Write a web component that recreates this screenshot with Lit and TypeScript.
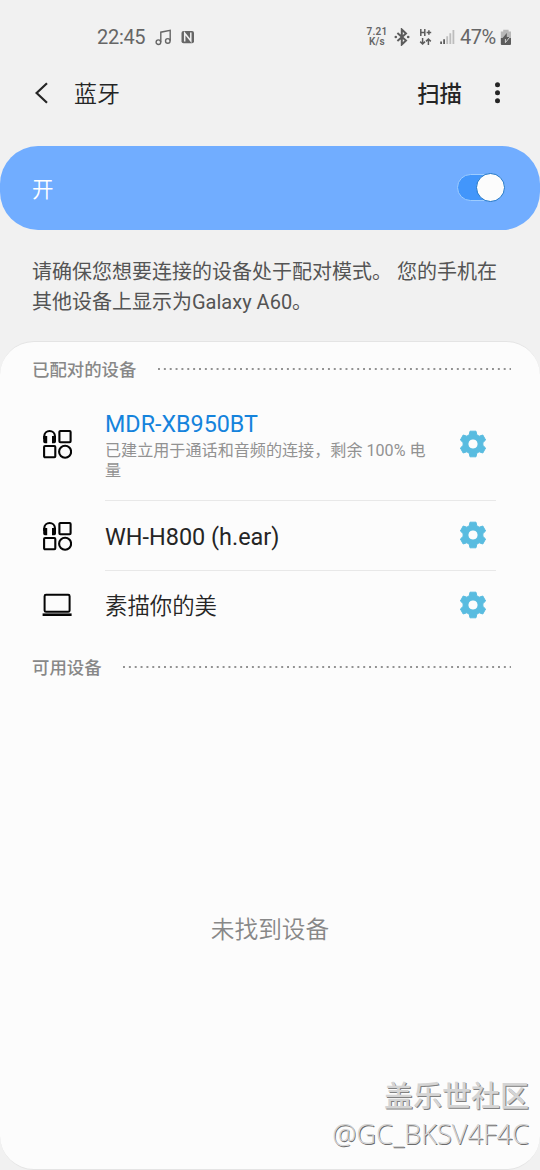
import { LitElement, html, css, svg, nothing } from 'lit';
import { customElement, property } from 'lit/decorators.js';

type DeviceKind = 'audio' | 'laptop';

interface Device {
    name: string;
    kind: DeviceKind;
    status?: string;
}

const PAIRED: Device[] = [
    { name: 'MDR-XB950BT', kind: 'audio', status: '已建立用于通话和音频的连接，剩余 100% 电量' },
    { name: 'WH-H800 (h.ear)', kind: 'audio' },
    { name: '素描你的美', kind: 'laptop' },
];

const audioIcon = svg`
    <g fill="none" stroke="#050505" stroke-width="2.1">
        <path d="M2.3 10V7A5.3 5 0 0 1 12.9 7V10" />
        <rect x="17.4" y="2" width="11.2" height="11.2" rx="1" />
        <rect x="2.1" y="17" width="11.2" height="11.2" rx="1" />
        <circle cx="23.1" cy="22.7" r="6" />
    </g>
    <path fill="#050505" d="M1.2 7H5.2V14.2H2.8Q1.2 14.2 1.2 12.5ZM10 7H14V12.5Q14 14.2 12.4 14.2H10Z" />`;

const laptopIcon = svg`
    <rect x="2.6" y="4.8" width="25" height="17" rx="1.4" fill="none" stroke="#050505" stroke-width="2" />
    <rect x="0.6" y="23.4" width="29" height="2.6" fill="#050505" />`;

/** Status bar with clock, network speed, signal and battery. */
@customElement('status-bar')
export class StatusBar extends LitElement {
    static styles = css`
        :host {
            display: flex;
            justify-content: space-between;
            align-items: center;
            box-sizing: border-box;
            height: 60px;
            padding: 14px 28px 0 97px;
            color: #666;
            font-size: 20px;
        }

        .group {
            display: flex;
            align-items: center;
        }

        .clock {
            width: 58px;
            letter-spacing: -0.3px;
        }

        .speed {
            width: 22px;
            margin-right: 6px;
            font-size: 10px;
            font-weight: 600;
            line-height: 10px;
            letter-spacing: 0.2px;
            text-align: center;
            white-space: nowrap;
        }

        .speed div {
            height: 10px;
        }

        .percent {
            width: 40px;
            margin-left: 5px;
            letter-spacing: -0.5px;
        }

        .nfc {
            margin-left: 9px;
        }

        .data {
            margin: 0 7px 0 9px;
        }

        svg {
            display: block;
        }
    `;

    render() {
        return html`
            <div class="group">
                <span class="clock">22:45</span>
                <svg width="17" height="17" viewBox="0 0 17 17" fill="none" stroke="#666" stroke-width="1.4">
                    <path d="M5.8 13.2V3.2L15.2 1.4V11.8" />
                    <circle cx="3.4" cy="13.2" r="2.3" />
                    <circle cx="12.8" cy="11.9" r="2.3" />
                </svg>
                <svg class="nfc" width="14" height="14" viewBox="0 0 14 14">
                    <rect x="0.5" y="1" width="12.5" height="12.2" rx="2" fill="#666" />
                    <path d="M3.7 11.4V3.2L9.8 10.8V2.6" fill="none" stroke="#f1f1f1" stroke-width="1.5" />
                </svg>
            </div>
            <div class="group">
                <div class="speed">
                    <div>7.21</div>
                    <div>K/s</div>
                </div>
                <svg width="16" height="18" viewBox="0 0 16 18">
                    <path d="M3.4 5L12 12.5L7.8 16.5V1.5L12 5.5L3.4 13" fill="none" stroke="#5c5c5c" stroke-width="2" />
                    <circle cx="1.8" cy="9" r="1.3" fill="#5c5c5c" />
                    <circle cx="14.2" cy="9" r="1.3" fill="#5c5c5c" />
                </svg>
                <svg class="data" width="14" height="18" viewBox="0 0 14 18" fill="none" stroke="#5c5c5c" stroke-width="1.5">
                    <path d="M1.8 1V8M5.8 1V8M1.8 4.5H5.8M7.6 4.5H12.2M9.9 2.2V6.8" />
                    <path d="M3.6 10V16M1.2 13.6L3.6 16L6 13.6M9.4 17V11M7 13.4L9.4 11L11.8 13.4" />
                </svg>
                <svg width="15" height="16" viewBox="0 0 15 16">
                    <path d="M0.2 12.4H2V15H0.2ZM3.2 10.2H5V15H3.2Z" fill="#5c5c5c" />
                    <path d="M6.3 7.2H8.1V15H6.3ZM9.4 4.2H11.2V15H9.4ZM12.5 1H14.3V15H12.5Z" fill="#bdbdbd" />
                </svg>
                <span class="percent">47%</span>
                <svg width="12" height="17" viewBox="0 0 12 17">
                    <path d="M3.2 0.8H8.6V2.6H11V9H0.8V2.6H3.2Z" fill="#b8b8b8" />
                    <path d="M0.8 9H11V15Q11 16 10 16H1.8Q0.8 16 0.8 15Z" fill="#5c5c5c" />
                    <path d="M6.8 4L2.2 9.6H5.2V13.6L9.8 8H6.8Z" fill="#5c5c5c" />
                    <path d="M5.4 10V13.6L9.6 8.4" fill="none" stroke="#eee" stroke-width="0.8" />
                </svg>
            </div>
        `;
    }
}

/** Section title followed by a dotted rule. */
@customElement('section-title')
export class SectionTitle extends LitElement {
    @property() label = '';

    static styles = css`
        :host {
            display: flex;
            align-items: center;
            padding: 0 29.5px 0 32px;
            color: #888;
            font-size: 17.4px;
            font-weight: 500;
            line-height: 26px;
        }

        .rule {
            flex: 1;
            height: 2px;
            margin: 0 0 2px 21.5px;
            background: radial-gradient(circle at 1px 1px, #929292 0.9px, transparent 1.4px) 0 0 / 5.87px 2px repeat-x;
        }
    `;

    render() {
        return html`<span>${this.label}</span><span class="rule"></span>`;
    }
}

@customElement('device-row')
export class DeviceRow extends LitElement {
    @property({ attribute: false }) device!: Device;

    static styles = css`
        :host {
            display: flex;
            align-items: center;
            box-sizing: border-box;
            height: 69.5px;
            padding: 0 44px 0 42px;
        }

        :host(.tall) {
            height: 114px;
        }

        svg {
            display: block;
            flex: none;
        }

        .body {
            display: flex;
            align-items: center;
            box-sizing: border-box;
            flex: 1;
            height: 100%;
            margin-left: 33px;
            border-bottom: 1.5px solid #e8e8e8;
        }

        :host(.last) .body {
            border-bottom-color: transparent;
        }

        .text {
            width: 325px;
            margin-top: 4px;
        }

        :host(.tall) .text {
            margin-top: 5px;
        }

        .name {
            color: #252525;
            font-size: 23.45px;
            line-height: 29px;
            white-space: nowrap;
        }

        :host(.tall) .name {
            margin-top: -2px;
            padding-bottom: 2px;
            font-size: 23.3px;
        }

        .name.cjk {
            font-size: 22.4px;
            font-weight: 350;
        }

        .connected {
            color: #1583dc;
        }

        .status {
            color: #929292;
            font-size: 16.1px;
            line-height: 20px;
        }

        .gear {
            margin-left: 28.5px;
        }
    `;

    render() {
        const { name, kind, status } = this.device;
        const cjk = kind === 'laptop' ? 'cjk' : '';
        return html`
            <svg width="30" height="30" viewBox="0 0 30 30">
                ${kind === 'audio' ? audioIcon : laptopIcon}
            </svg>
            <div class="body">
                <div class="text">
                    <div class="name ${cjk} ${status ? 'connected' : ''}">${name}</div>
                    ${status ? html`<div class="status">${status}</div>` : nothing}
                </div>
                <svg class="gear" width="28" height="28" viewBox="0 0 28 28">
                    <path
                        fill="#59bce0"
                        fill-rule="evenodd"
                        stroke="#59bce0"
                        stroke-linejoin="round"
                        d="M11 1.2H17L17.8 4.8L20.2 6.2L23.8 5L26.6 10L23.9 12.6V15.4L26.6 18L23.8 23L20.2 21.8L17.8 23.2L17 26.8H11L10.2 23.2L7.8 21.8L4.2 23L1.4 18L4.1 15.4V12.6L1.4 10L4.2 5L7.8 6.2L10.2 4.8ZM14 8.9A5.1 5.1 0 1 0 14 19.1A5.1 5.1 0 1 0 14 8.9Z"
                    />
                </svg>
            </div>
        `;
    }
}

@customElement('app-root')
export class AppRoot extends LitElement {
    static styles = css`
        :host {
            display: flex;
            flex-direction: column;
            position: relative;
            box-sizing: border-box;
            height: 1170px;
            overflow: hidden;
            background: #f1f1f1;
            font-family: Roboto, 'Noto Sans CJK SC', sans-serif;
        }

        .header {
            display: flex;
            align-items: center;
            height: 66px;
            padding: 0 36px 0 34px;
            color: #252525;
        }

        .title {
            flex: 1;
            margin: -2px 0 0 24px;
            font-size: 23px;
            font-weight: 350;
        }

        .scan {
            margin: -2px 29px 0 0;
            font-size: 22.4px;
            font-weight: 500;
        }

        .master {
            display: flex;
            align-items: center;
            justify-content: space-between;
            box-sizing: border-box;
            height: 84px;
            margin-top: 19.5px;
            padding: 0 35px 0 32px;
            border-radius: 38px;
            background: #71adff;
            color: #fff;
            font-size: 21.5px;
            font-weight: 350;
        }

        .switch {
            display: flex;
            align-items: center;
            justify-content: flex-end;
            box-sizing: border-box;
            width: 48px;
            height: 27px;
            border: 1px solid #9dccff;
            border-radius: 14px;
            background: #4296fb;
        }

        .thumb {
            flex: none;
            box-sizing: border-box;
            width: 29px;
            height: 29px;
            margin-right: -1px;
            border: 1.5px solid #1c74c8;
            border-radius: 50%;
            background: #fcfcfc;
        }

        .hint {
            margin: 27.5px 32px 0;
            color: #545454;
            font-size: 20px;
            line-height: 30px;
            white-space: nowrap;
        }

        .panel {
            display: flex;
            flex-direction: column;
            flex: 1;
            box-sizing: border-box;
            margin: 24px 0 0;
            padding-top: 15px;
            border: 1px solid #e4e4e4;
            border-width: 1px 0;
            border-radius: 34px;
            background: #fcfcfc;
        }

        .list {
            margin: 4px 0 15px;
        }

        .empty {
            margin-top: 231px;
            color: #888;
            font-size: 23.7px;
            font-weight: 350;
            line-height: 36px;
            text-align: center;
        }

        .watermark {
            position: absolute;
            right: 11px;
            bottom: 17px;
            color: #d4d4d4;
            font-family: 'Open Sans', 'Noto Sans CJK SC', sans-serif;
            font-size: 27.2px;
            font-weight: 300;
            line-height: 38px;
            text-align: right;
            text-shadow: 0.8px 0.8px 0 #6c6c6c;
        }

        .community {
            font-size: 29px;
            font-weight: 500;
            text-shadow: 1px 1px 0 #808080;
        }
    `;

    render() {
        return html`
            <status-bar></status-bar>
            <div class="header">
                <svg width="16" height="24" viewBox="0 0 16 24" fill="none" stroke="#252525" stroke-width="2.2">
                    <path d="M13 2.2L2.6 12L13 21.8" />
                </svg>
                <span class="title">蓝牙</span>
                <span class="scan">扫描</span>
                <svg width="13" height="24" viewBox="0 0 13 24" fill="#252525">
                    <circle cx="6.5" cy="3.8" r="2.5" />
                    <circle cx="6.5" cy="11.8" r="2.5" />
                    <circle cx="6.5" cy="19.8" r="2.5" />
                </svg>
            </div>
            <div class="master">
                <span>开</span>
                <div class="switch"><div class="thumb"></div></div>
            </div>
            <div class="hint">请确保您想要连接的设备处于配对模式。 您的手机在<br />其他设备上显示为Galaxy A60。</div>
            <div class="panel">
                <section-title label="已配对的设备"></section-title>
                <div class="list">
                    ${PAIRED.map(
                        (device, i) => html`
                            <device-row
                                class="${device.status ? 'tall' : ''} ${i === PAIRED.length - 1 ? 'last' : ''}"
                                .device=${device}
                            ></device-row>
                        `
                    )}
                </div>
                <section-title label="可用设备"></section-title>
                <div class="empty">未找到设备</div>
            </div>
            <div class="watermark">
                <div class="community">盖乐世社区</div>
                <div>@GC_BKSV4F4C</div>
            </div>
        `;
    }
}
